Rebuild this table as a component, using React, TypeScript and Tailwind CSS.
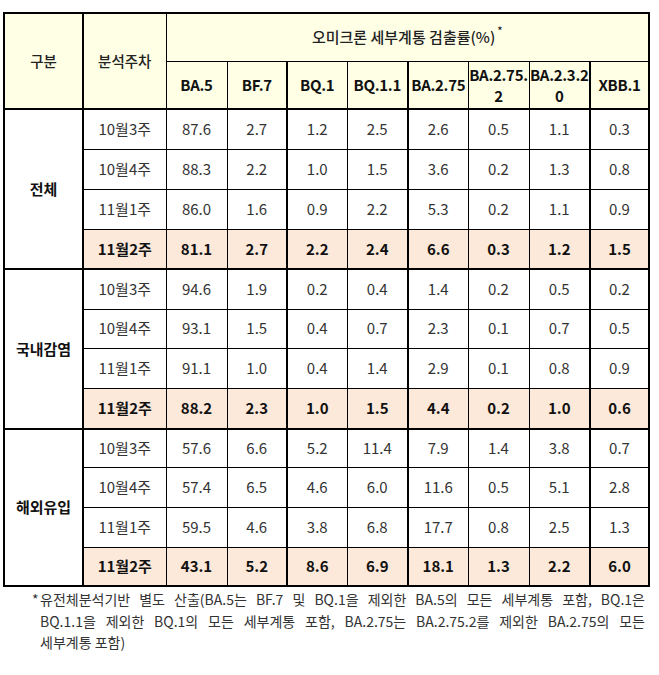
const widths = [79, 83, 61, 60, 60, 61, 60, 61, 61, 59];

// thick vertical line after these column indexes
const thickRight = [0, 3, 5, 8];

type Row = { week: string; vals: string[] };
type Group = { name: string; heights: number[]; rows: Row[] };

const groups: Group[] = [
  {
    name: '전체',
    heights: [40, 40, 40, 40],
    rows: [
      { week: '10월3주', vals: ['87.6', '2.7', '1.2', '2.5', '2.6', '0.5', '1.1', '0.3'] },
      { week: '10월4주', vals: ['88.3', '2.2', '1.0', '1.5', '3.6', '0.2', '1.3', '0.8'] },
      { week: '11월1주', vals: ['86.0', '1.6', '0.9', '2.2', '5.3', '0.2', '1.1', '0.9'] },
      { week: '11월2주', vals: ['81.1', '2.7', '2.2', '2.4', '6.6', '0.3', '1.2', '1.5'] },
    ],
  },
  {
    name: '국내감염',
    heights: [40, 39, 40, 41],
    rows: [
      { week: '10월3주', vals: ['94.6', '1.9', '0.2', '0.4', '1.4', '0.2', '0.5', '0.2'] },
      { week: '10월4주', vals: ['93.1', '1.5', '0.4', '0.7', '2.3', '0.1', '0.7', '0.5'] },
      { week: '11월1주', vals: ['91.1', '1.0', '0.4', '1.4', '2.9', '0.1', '0.8', '0.9'] },
      { week: '11월2주', vals: ['88.2', '2.3', '1.0', '1.5', '4.4', '0.2', '1.0', '0.6'] },
    ],
  },
  {
    name: '해외유입',
    heights: [38, 40, 40, 39],
    rows: [
      { week: '10월3주', vals: ['57.6', '6.6', '5.2', '11.4', '7.9', '1.4', '3.8', '0.7'] },
      { week: '10월4주', vals: ['57.4', '6.5', '4.6', '6.0', '11.6', '0.5', '5.1', '2.8'] },
      { week: '11월1주', vals: ['59.5', '4.6', '3.8', '6.8', '17.7', '0.8', '2.5', '1.3'] },
      { week: '11월2주', vals: ['43.1', '5.2', '8.6', '6.9', '18.1', '1.3', '2.2', '6.0'] },
    ],
  },
];

const variants: React.ReactNode[] = [
  'BA.5',
  'BF.7',
  'BQ.1',
  'BQ.1.1',
  'BA.2.75',
  <>BA.2.75.<br />2</>,
  <>BA.2.3.2<br />0</>,
  'XBB.1',
];

function vline(i: number) {
  return thickRight.includes(i) ? 'border-r-2' : 'border-r';
}

export default function App() {
  return (
    <div className="min-h-screen bg-white pl-[3px] pt-[12px] font-['Noto_Sans_CJK_KR',sans-serif] text-[#333]">
      <table className="table-fixed border-collapse border-2 border-black" style={{ width: 645 }}>
        <colgroup>
          {widths.map((w, i) => (
            <col key={i} style={{ width: w }} />
          ))}
        </colgroup>
        <thead>
          <tr className="h-[48px]">
            <th rowSpan={2} className="border border-black border-r-2 border-b-2 bg-[#ffffe6] text-[14.5px] font-medium text-[#222]">
              구분
            </th>
            <th rowSpan={2} className="border border-black border-b-2 bg-[#ffffe6] text-[14.5px] font-medium text-[#222]">
              분석주차
            </th>
            <th colSpan={8} className="border border-black bg-[#ffffe6] text-[15px] font-medium text-[#222]">
              오미크론 세부계통 검출률(%)
              <span className="relative -top-[8px] ml-[2px] text-[11px]">*</span>
            </th>
          </tr>
          <tr className="h-[48px]">
            {variants.map((v, i) => (
              <th
                key={i}
                className={`border border-black border-b-2 ${vline(i + 2)} bg-[#ffffe6] text-[15px] leading-[21px] font-bold text-[#111] tracking-[-0.3px]`}
              >
                {v}
              </th>
            ))}
          </tr>
        </thead>
        {groups.map(g => (
          <tbody key={g.name}>
            {g.rows.map((r, ri) => {
              const last = ri === 3;
              return (
                <tr key={ri} style={{ height: g.heights[ri] }} className={last ? 'border-b-2 border-black' : ''}>
                  {ri === 0 && (
                    <td rowSpan={4} className="border border-black border-r-2 border-b-2 bg-white text-center text-[15px] font-bold text-[#111]">
                      {g.name}
                    </td>
                  )}
                  <td
                    className={`border border-black text-center text-[15px] ${
                      last ? 'border-b-2 bg-[#fde9d9] font-bold text-[#111]' : 'bg-white'
                    }`}
                  >
                    {r.week}
                  </td>
                  {r.vals.map((v, vi) => (
                    <td
                      key={vi}
                      className={`border border-black ${vline(vi + 2)} text-center text-[15px] ${
                        last ? 'border-b-2 bg-[#fde9d9] font-bold text-[#111]' : 'bg-white'
                      }`}
                    >
                      {v}
                    </td>
                  ))}
                </tr>
              );
            })}
          </tbody>
        ))}
      </table>

      <div className="relative mt-[2px] w-[605px] ml-[37px] text-[14px] leading-[21.5px] text-[#333]">
        <span className="absolute -left-[8px] top-0">*</span>
        <p className="text-justify [text-align-last:justify]">
          유전체분석기반 별도 산출(BA.5는 BF.7 및 BQ.1을 제외한 BA.5의 모든 세부계통 포함, BQ.1은
        </p>
        <p className="text-justify [text-align-last:justify]">
          BQ.1.1을 제외한 BQ.1의 모든 세부계통 포함, BA.2.75는 BA.2.75.2를 제외한 BA.2.75의 모든
        </p>
        <p>세부계통 포함)</p>
      </div>
    </div>
  );
}
